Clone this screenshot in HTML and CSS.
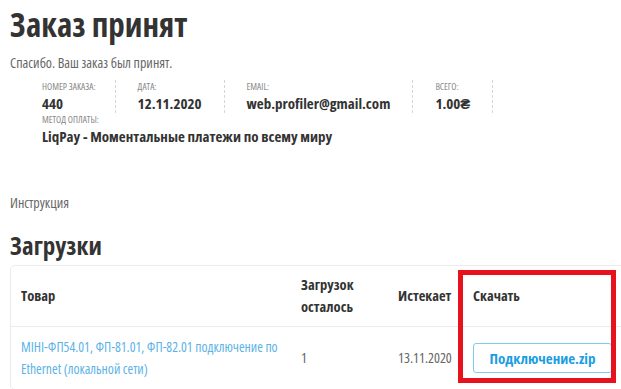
FILE: index.html
```html
<!DOCTYPE html>
<html lang="ru">
<head>
    <meta charset="UTF-8">
    <meta name="viewport" content="width=device-width, initial-scale=1.0">
    <title>Заказ принят</title>
    <link rel="stylesheet" href="styles.css">
</head>
<body>
<div class="page">
    <h1 class="page-title">Заказ принят</h1>
    <p class="thanks">Спасибо. Ваш заказ был принят.</p>

    <ul class="order-overview">
        <li class="ov-item">Номер заказа:<strong>440</strong></li>
        <li class="ov-item">Дата:<strong>12.11.2020</strong></li>
        <li class="ov-item">Email:<strong>web.profiler@gmail.com</strong></li>
        <li class="ov-item">Всего:<strong>1.00₴</strong></li>
        <li class="ov-item ov-method">Метод оплаты:<strong>LiqPay - Моментальные платежи по всему миру</strong></li>
    </ul>

    <p class="instruction">Инструкция</p>

    <h2 class="section-title">Загрузки</h2>

    <div class="table-wrap">
        <table class="downloads">
            <thead>
                <tr>
                    <th class="col-product">Товар</th>
                    <th class="col-remain">Загрузок осталось</th>
                    <th class="col-expires">Истекает</th>
                    <th class="col-file">Скачать</th>
                </tr>
            </thead>
            <tbody>
                <tr>
                    <td class="col-product"><a href="#">MIHI-ФП54.01, ФП-81.01, ФП-82.01 подключение по Ethernet (локальной сети)</a></td>
                    <td class="col-remain">1</td>
                    <td class="col-expires">13.11.2020</td>
                    <td class="col-file"><a class="btn" href="#">Подключение.zip</a></td>
                </tr>
            </tbody>
        </table>
        <div class="highlight"></div>
    </div>
</div>
</body>
</html>
```

FILE: styles.css
```css
body {
    margin: 0;
    font-family: "Open Sans", "Liberation Sans", sans-serif;
    font-stretch: 75%;
    color: #666666;
    background: #ffffff;
    overflow: hidden;
}

.page {
    padding: 0 0 0 10px;
}

.page-title {
    margin: 0;
    padding-top: 3px;
    font-size: 33px;
    line-height: 44px;
    font-weight: 700;
    color: #333333;
}

.thanks {
    margin: 6px 0 0;
    font-size: 14px;
    line-height: 20px;
}

.order-overview {
    list-style: none;
    margin: 7px 0 0;
    padding: 0 0 0 32px;
    display: flex;
    flex-wrap: wrap;
}

.ov-item {
    font-size: 9.5px;
    text-transform: uppercase;
    line-height: 13px;
    padding: 0 22px;
    border-right: 1px dashed #d6d6d6;
    color: #888888;
}

.ov-item:first-child {
    padding-left: 0;
    padding-right: 19px;
}

.ov-item strong {
    display: block;
    font-size: 15px;
    line-height: 20px;
    text-transform: none;
    color: #333333;
}

.ov-method {
    flex-basis: 100%;
    padding-left: 0;
    border-right: none;
}

.instruction {
    margin: 47px 0 0;
    font-size: 14px;
    line-height: 20px;
}

.section-title {
    margin: 15px 0 0;
    font-size: 25px;
    line-height: 34px;
    font-weight: 700;
    color: #333333;
}

.table-wrap {
    position: relative;
    margin-top: 3px;
    width: 622px;
}

.downloads {
    width: 100%;
    border-collapse: separate;
    border-spacing: 0;
    border: 1px solid #ebebeb;
    border-radius: 5px;
    font-size: 14px;
    line-height: 22px;
}

.downloads th {
    text-align: left;
    color: #333333;
    font-size: 14.5px;
    font-weight: 700;
    padding: 8px 10px;
    height: 42px;
    border-bottom: 1px solid #ebebeb;
}

.downloads td {
    padding: 9px 10px;
    height: 40px;
}

.col-product { width: 260px; }
.col-remain { width: 77px; }
.col-expires { width: 55px; }

.downloads td a {
    font-size: 13.7px;
    color: #5cb3e6;
    text-decoration: none;
}

.downloads .btn {
    display: inline-block;
    width: 137px;
    text-align: center;
    padding: 3px 0;
    border: 1px solid #7dccf0;
    border-radius: 3px;
    font-size: 15px;
    font-weight: 700;
    color: #1b9de2;
}

.highlight {
    position: absolute;
    left: 448px;
    top: 5px;
    width: 148px;
    height: 103px;
    border: 5px solid #e8121d;
}
```
